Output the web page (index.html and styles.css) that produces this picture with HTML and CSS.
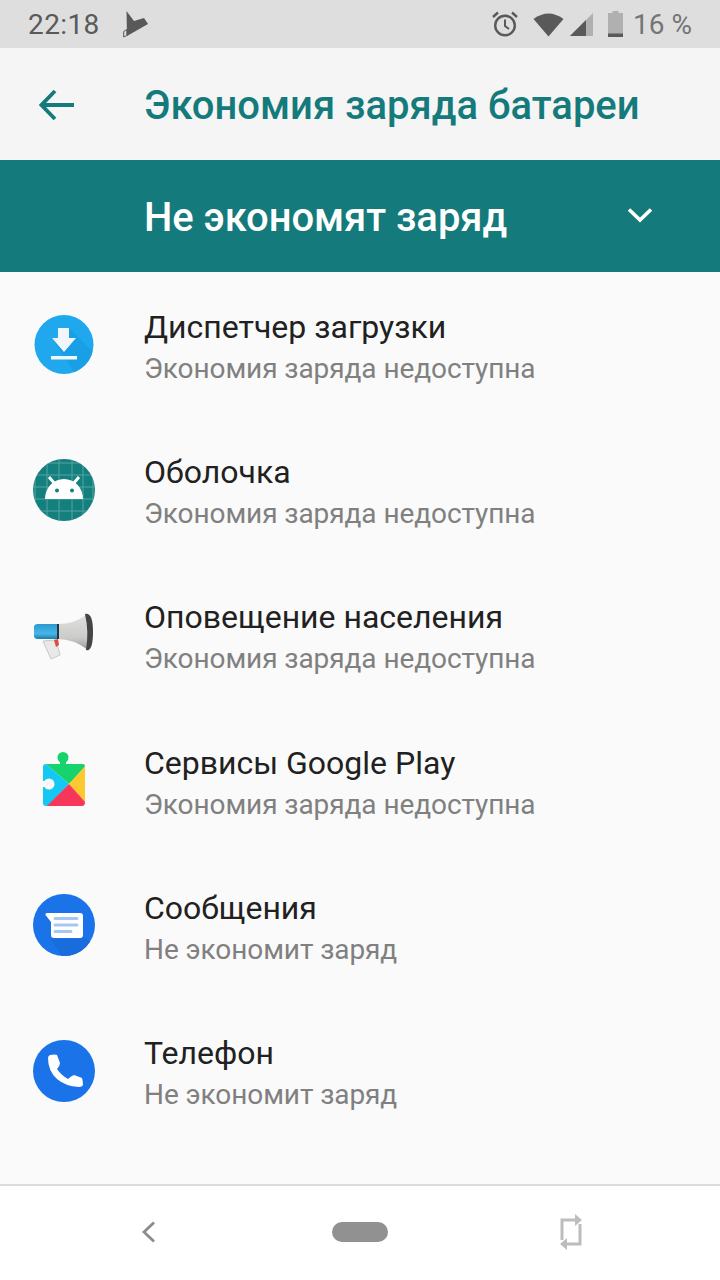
FILE: index.html
```html
<!DOCTYPE html>
<html lang="ru">
<head>
  <meta charset="UTF-8" />
  <meta name="viewport" content="width=device-width, initial-scale=1.0"/>
  <title>Экономия заряда батареи</title>
  <link rel="stylesheet" href="styles.css">
</head>
<body>
  <div class="screen">
    <div class="status-bar">
      <div class="status-left">
        <span class="clock">22:18</span>
        <svg class="play-note" width="26" height="27" viewBox="0 0 26 27">
          <path d="M3.500 0 L11 10 L21 7 L25 13 L4 25 Z" fill="#595959"/>
          <path d="M0.700 20.500 L3.800 18.500 V24.500 L0.700 26 Z" fill="#dedede" stroke="#595959" stroke-width="1"/>
        </svg>
      </div>
      <div class="status-right">
        <svg class="alarm" width="26" height="26" viewBox="0 0 26 26" fill="none" stroke="#595959" stroke-width="2.400">
          <circle cx="13" cy="14.500" r="9.800"/>
          <path d="M13 8.500 V15 L17 18" stroke-width="2"/>
          <path d="M1 6 L6 1.500 M25 6 L20 1.500"/>
        </svg>
        <svg class="wifi" width="31" height="25" viewBox="0 0 31 25">
          <path d="M0.500 7 Q15.500 -4 30.500 7 L15.500 24.500 Z" fill="#595959"/>
        </svg>
        <svg class="signal" width="23" height="24" viewBox="0 0 23 24">
          <path d="M0 24 L23 1 V24 Z" fill="#b0b0b0"/>
          <path d="M0 24 L16 8 V24 Z" fill="#595959"/>
        </svg>
        <svg class="battery" width="15" height="26" viewBox="0 0 15 26">
          <path d="M4.500 0 H10.500 V2 H15 V26 H0 V2 H4.500 Z" fill="#b0b0b0"/>
          <rect x="0" y="22.500" width="15" height="3.500" fill="#595959"/>
        </svg>
        <span class="percent">16 %</span>
      </div>
    </div>

    <header class="toolbar">
      <svg class="back-arrow" width="35" height="32" viewBox="0 0 35 32" fill="none" stroke="#147a7c" stroke-width="3.800">
        <path d="M2 16 H35 M16 2 L2.500 16 L16 30"/>
      </svg>
      <h1 class="toolbar-title">Экономия заряда батареи</h1>
    </header>

    <div class="filter-bar">
      <span class="filter-label">Не экономят заряд</span>
      <svg class="filter-chevron" width="26" height="16" viewBox="0 0 26 16" fill="none" stroke="#fff" stroke-width="3.600">
        <path d="M2 2.500 L13 13 L24 2.500"/>
      </svg>
    </div>

    <ul class="app-list">
      <li class="app-row">
        <svg class="app-icon" width="64" height="64" viewBox="0 0 64 64">
          <defs>
            <clipPath id="dlClip"><circle cx="32" cy="31.500" r="29.500"/></clipPath>
          </defs>
          <circle cx="32" cy="31.500" r="29.500" fill="#1fa8ee"/>
          <path d="M20 25 L26 25 L37 15 L64 42 V64 H45 Z" fill="#189fe6" clip-path="url(#dlClip)"/>
          <path d="M26 15 H37 V25 H44 L32 39 L20 25 H26 Z" fill="#f0f6fa"/>
          <rect x="19" y="43" width="26" height="3.500" fill="#f0f6fa"/>
        </svg>
        <div class="app-text">
          <div class="app-name">Диспетчер загрузки</div>
          <div class="app-state">Экономия заряда недоступна</div>
        </div>
      </li>
      <li class="app-row">
        <svg class="app-icon" width="64" height="64" viewBox="0 0 64 64">
          <defs>
            <clipPath id="gridClip"><circle cx="32" cy="32" r="31"/></clipPath>
          </defs>
          <circle cx="32" cy="32" r="31" fill="#14807e"/>
          <path d="M3 0 V64 M15 0 V64 M27 0 V64 M40 0 V64 M51 0 V64 M61 0 V64 M0 5 H64 M0 17 H64 M0 29 H64 M0 41 H64 M0 53 H64" stroke="#55a3a1" stroke-width="1" fill="none" clip-path="url(#gridClip)"/>
          <path d="M13 41 A19 20 0 0 1 51 41 Z" fill="#fff"/>
          <path d="M23 26 L17 19 M41 26 L47 19" stroke="#fff" stroke-width="3"/>
          <circle cx="25" cy="32.500" r="2" fill="#14807e"/>
          <circle cx="40" cy="32.500" r="2" fill="#14807e"/>
        </svg>
        <div class="app-text">
          <div class="app-name">Оболочка</div>
          <div class="app-state">Экономия заряда недоступна</div>
        </div>
      </li>
      <li class="app-row">
        <svg class="app-icon" width="64" height="64" viewBox="0 0 64 64">
          <defs>
            <linearGradient id="hornGrad" x1="0" y1="0" x2="0" y2="1">
              <stop offset="0" stop-color="#e0e0de"/>
              <stop offset="0.650" stop-color="#cbcbc9"/>
              <stop offset="1" stop-color="#9a9a98"/>
            </linearGradient>
            <linearGradient id="bodyGrad" x1="0" y1="0" x2="0" y2="1">
              <stop offset="0" stop-color="#2a9ad0"/>
              <stop offset="0.650" stop-color="#48b6e8"/>
              <stop offset="1" stop-color="#1d7ba8"/>
            </linearGradient>
          </defs>
          <path d="M11 38 L24 37 L28 52 L19 56 Z" fill="#e8e8e8" stroke="#c8c8c8" stroke-width="1"/>
          <path d="M22 37 L26 36 L27 42 L24 44 Z" fill="#dc4a40"/>
          <path d="M26 21 Q42 21 54 12 L56 47 Q42 36 26 36 Z" fill="url(#hornGrad)"/>
          <path d="M2 24 Q2 21 6 21 H26 V36 H6 Q2 36 2 33 Z" fill="url(#bodyGrad)"/>
          <rect x="25" y="21" width="2" height="15" fill="#26343c"/>
          <path d="M53 11 Q61 9 61 29 Q61 49 54 47 Q57 29 53 11 Z" fill="#454545"/>
        </svg>
        <div class="app-text">
          <div class="app-name">Оповещение населения</div>
          <div class="app-state">Экономия заряда недоступна</div>
        </div>
      </li>
      <li class="app-row">
        <svg class="app-icon" width="64" height="64" viewBox="0 0 64 64">
          <circle cx="31" cy="9.500" r="5.500" fill="#16d36e"/>
          <rect x="28" y="12" width="6" height="6" fill="#16d36e"/>
          <path d="M14 16 H51 Q53 16 53 19 L37 36 Z" fill="#16d36e"/>
          <path d="M14 16 L37 36 L16 58 H14 Q11 58 11 55 V19 Q11 16 14 16 Z" fill="#14c8f2"/>
          <path d="M53 18 V55 L37 36 Z" fill="#fdc92f"/>
          <path d="M37 36 L53 54 Q53 58 50 58 H15 Z" fill="#f6365a"/>
          <circle cx="17" cy="36" r="5.500" fill="#fafafa"/>
          <rect x="9" y="33" width="8" height="6" fill="#fafafa"/>
        </svg>
        <div class="app-text">
          <div class="app-name">Сервисы Google Play</div>
          <div class="app-state">Экономия заряда недоступна</div>
        </div>
      </li>
      <li class="app-row">
        <svg class="app-icon" width="64" height="64" viewBox="0 0 64 64">
          <defs>
            <clipPath id="msgClip"><circle cx="32" cy="32" r="31"/></clipPath>
          </defs>
          <circle cx="32" cy="32" r="31" fill="#1a73e8"/>
          <path d="M19 46 H50 L52 44 L60 50 L48 64 H30 Z" fill="#186cdb" clip-path="url(#msgClip)"/>
          <path d="M13.500 22 Q13 20 15 20 H48 Q51 20 51 23 V42 Q51 45 48 45 H22 Q19 45 19 42 V29 Z" fill="#fff"/>
          <path d="M23 25.500 H45 M23 32 H45 M23 38.500 H39" stroke="#a5c7f5" stroke-width="3" stroke-linecap="round" fill="none"/>
        </svg>
        <div class="app-text">
          <div class="app-name">Сообщения</div>
          <div class="app-state">Не экономит заряд</div>
        </div>
      </li>
      <li class="app-row">
        <svg class="app-icon" width="64" height="64" viewBox="0 0 64 64">
          <circle cx="32" cy="32" r="31" fill="#1a73e8"/>
          <path d="M18 16 Q23 15 25 16 L28 24 Q28 27 25 30 Q29 36 36 40 Q39 37 42 36 L50 39 Q51 42 51 46 Q50 48 47 48 Q33 47 25 40 Q16 32 16 19 Q16 17 18 16 Z" fill="#fff"/>
        </svg>
        <div class="app-text">
          <div class="app-name">Телефон</div>
          <div class="app-state">Не экономит заряд</div>
        </div>
      </li>
    </ul>

    <nav class="nav-bar">
      <svg width="16" height="22" viewBox="0 0 16 22" fill="none" stroke="#8c8c8c" stroke-width="2.800">
        <path d="M13 1.500 L3 11 L13 20.500"/>
      </svg>
      <div class="home-pill"></div>
      <svg width="24" height="36" viewBox="0 0 24 36" fill="none" stroke="#bdbdbd" stroke-width="3">
        <path d="M17 6 H3 V26"/>
        <path d="M21 10 V30 H7"/>
        <path d="M16 0 L23 6 L16 12 Z M8 24 L1 30 L8 36 Z" fill="#bdbdbd" stroke="none"/>
      </svg>
    </nav>
  </div>
</body>
</html>
```

FILE: styles.css
```css
* { box-sizing: border-box; }
body { margin: 0; padding: 0; font-family: Roboto, "Noto Sans", sans-serif; background: #fafafa; }
.screen { width: 720px; height: 1280px; display: flex; flex-direction: column; overflow: hidden; }

.status-bar {
  height: 48px; background: #dedede; padding: 0 28px;
  display: flex; justify-content: space-between; align-items: center;
  color: #595959; font-size: 28px;
}
.status-left { display: flex; align-items: center; gap: 23px; }
.clock { letter-spacing: 0.4px; }
.status-right { display: flex; align-items: center; }
.status-right .wifi { margin-left: 15px; }
.status-right .signal { margin-left: 6px; }
.status-right .battery { margin-left: 15px; }
.percent { margin-left: 10px; color: #757575; }

.toolbar { height: 112px; background: #f5f5f5; display: flex; align-items: center; padding: 2px 0 0 39px; }
.back-arrow { flex: none; }
.toolbar-title { margin: 0 0 0 70px; font-size: 40px; font-weight: 500; color: #147a7c; }

.filter-bar {
  height: 112px; background: #147a7c; color: white;
  display: flex; align-items: center; justify-content: space-between;
  padding: 2px 67px 0 144px;
}
.filter-label { font-size: 40px; font-weight: 500; letter-spacing: -0.05px; }
.filter-chevron { margin-top: -4px; }

.app-list { list-style: none; margin: 0; padding: 0; flex: 1; background: #fafafa; }
.app-row { height: 145.2px; display: flex; align-items: center; padding-left: 32px; }
.app-icon { flex: none; margin-right: 48px; }
.app-text { display: flex; flex-direction: column; gap: 6px; padding-top: 5px; }
.app-name { font-size: 32px; color: #212121; line-height: 38px; }
.app-state { font-size: 28px; color: #808080; line-height: 34px; letter-spacing: -0.08px; }

.nav-bar {
  height: 96px; background: white; border-top: 2px solid #dcdcdc;
  display: flex; align-items: center; justify-content: space-between;
  padding: 0 137px 2px 141px;
}
.home-pill { width: 56px; height: 20px; border-radius: 10px; background: #919191; margin-left: 4px; }
```
